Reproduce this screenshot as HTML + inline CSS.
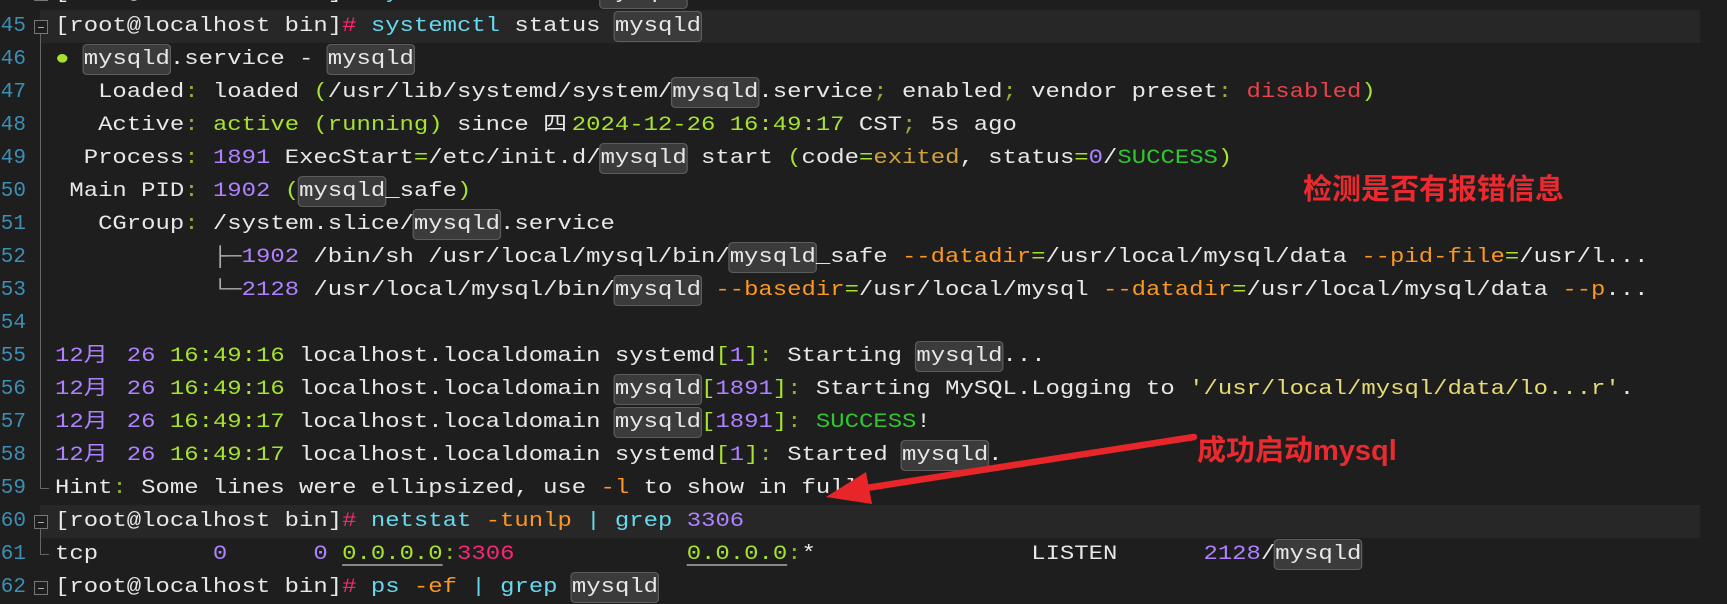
<!DOCTYPE html>
<html><head><meta charset="utf-8"><style>
html,body{margin:0;padding:0;}
body{width:1727px;height:578px;background:#1e1e1e;overflow:hidden;position:relative;font-family:"Liberation Mono","Noto Sans CJK SC",monospace;}
#w{position:absolute;left:0;top:2px;width:1727px;height:578px;}
.ln{position:absolute;left:0;width:26px;text-align:right;color:#3d8fb5;font-size:21px;line-height:33px;height:33px;}
.cur{position:absolute;left:40px;width:1660px;height:33px;background:#272727;}
.fold{position:absolute;left:34px;width:12px;height:12px;border:1px solid #777;background:#1e1e1e;}
.fold:after{content:"";position:absolute;left:3px;top:5.5px;width:6px;height:1px;background:#aaa;}
.vl{position:absolute;width:1px;background:#666;}
.hl{position:absolute;height:1px;background:#666;}
#t{position:absolute;left:55px;top:0;transform:scaleX(1.196);transform-origin:0 0;}
.l{position:absolute;left:0;white-space:pre;font-size:20px;line-height:33px;height:33px;color:#e8e8e8;}
.p{color:#f92672}.c{color:#66d9ef}.g{color:#a6e22e}.v{color:#ae81ff}.o{color:#fd971f}.r{color:#e8434a}.y{color:#e6db74}.s{color:#2ec82e}.e{color:#d2a23a}.k{color:#8fae3a}.b{color:#aaa}
.h{background:#3b3b3b;border:1px solid #5c5c5c;border-radius:4px;padding:3px 0;margin:0 -1px;}
.u{text-decoration:underline;text-decoration-color:#888;text-underline-offset:5px;}
.cj{display:inline-block;width:24px;}
.cj2{display:inline-block;width:24px;}
.ann{position:absolute;color:#ea2a2e;font-family:"Liberation Sans","Noto Sans CJK SC",sans-serif;font-weight:bold;font-size:29px;line-height:36px;white-space:nowrap;}
</style></head><body>
<div id="w">
<div class="cur" style="top:8px"></div>
<div class="cur" style="top:503px"></div>

<div class="ln" style="top:-25px">44</div>
<div class="ln" style="top:8px">45</div>
<div class="ln" style="top:41px">46</div>
<div class="ln" style="top:74px">47</div>
<div class="ln" style="top:107px">48</div>
<div class="ln" style="top:140px">49</div>
<div class="ln" style="top:173px">50</div>
<div class="ln" style="top:206px">51</div>
<div class="ln" style="top:239px">52</div>
<div class="ln" style="top:272px">53</div>
<div class="ln" style="top:305px">54</div>
<div class="ln" style="top:338px">55</div>
<div class="ln" style="top:371px">56</div>
<div class="ln" style="top:404px">57</div>
<div class="ln" style="top:437px">58</div>
<div class="ln" style="top:470px">59</div>
<div class="ln" style="top:503px">60</div>
<div class="ln" style="top:536px">61</div>
<div class="ln" style="top:569px">62</div>

<div class="fold" style="top:-15px"></div>
<div class="fold" style="top:18px"></div>
<div class="vl" style="left:40px;top:32px;height:455px"></div>
<div class="hl" style="left:40px;top:486px;width:9px"></div>
<div class="fold" style="top:513px"></div>
<div class="vl" style="left:40px;top:527px;height:26px"></div>
<div class="hl" style="left:40px;top:552px;width:9px"></div>
<div class="fold" style="top:579px"></div>

<div id="t">
<div class="l" style="top:-25px">[root@localhost bin]<span class="p">#</span> <span class="c">systemctl</span> start <span class="h">mysqld</span></div>
<div class="l" style="top:8px">[root@localhost bin]<span class="p">#</span> <span class="c">systemctl</span> status <span class="h">mysqld</span></div>
<div class="l" style="top:41px"><span class="g">●</span> <span class="h">mysqld</span>.service - <span class="h">mysqld</span></div>
<div class="l" style="top:74px">   Loaded<span class="k">:</span> loaded <span class="g">(</span>/usr/lib/systemd/system/<span class="h">mysqld</span>.service<span class="k">;</span> enabled<span class="k">;</span> vendor preset<span class="k">:</span> <span class="r">disabled</span><span class="g">)</span></div>
<div class="l" style="top:107px">   Active<span class="k">:</span> <span class="g">active (running)</span> since <span class="cj2">四</span><span class="g">2024-12-26 16:49:17</span> CST<span class="k">;</span> 5s ago</div>
<div class="l" style="top:140px">  Process<span class="k">:</span> <span class="v">1891</span> ExecStart<span class="g">=</span>/etc/init.d/<span class="h">mysqld</span> start <span class="g">(</span>code<span class="g">=</span><span class="e">exited</span>, status<span class="g">=</span><span class="v">0</span>/<span class="s">SUCCESS</span><span class="g">)</span></div>
<div class="l" style="top:173px"> Main PID<span class="k">:</span> <span class="v">1902</span> <span class="g">(</span><span class="h">mysqld</span>_safe<span class="g">)</span></div>
<div class="l" style="top:206px">   CGroup<span class="k">:</span> /system.slice/<span class="h">mysqld</span>.service</div>
<div class="l" style="top:239px">           <span class="b">├─</span><span class="v">1902</span> /bin/sh /usr/local/mysql/bin/<span class="h">mysqld</span>_safe <span class="o">--datadir</span><span class="g">=</span>/usr/local/mysql/data <span class="o">--pid-file</span><span class="g">=</span>/usr/l...</div>
<div class="l" style="top:272px">           <span class="b">└─</span><span class="v">2128</span> /usr/local/mysql/bin/<span class="h">mysqld</span> <span class="o">--basedir</span><span class="g">=</span>/usr/local/mysql <span class="o">--datadir</span><span class="g">=</span>/usr/local/mysql/data <span class="o">--p</span>...</div>
<div class="l" style="top:338px"><span class="v">12<span class="cj">月</span></span> <span class="v">26</span> <span class="g">16:49:16</span> localhost.localdomain systemd<span class="g">[</span><span class="v">1</span><span class="g">]</span><span class="k">:</span> Starting <span class="h">mysqld</span>...</div>
<div class="l" style="top:371px"><span class="v">12<span class="cj">月</span></span> <span class="v">26</span> <span class="g">16:49:16</span> localhost.localdomain <span class="h">mysqld</span><span class="g">[</span><span class="v">1891</span><span class="g">]</span><span class="k">:</span> Starting MySQL.Logging to <span class="y">'/usr/local/mysql/data/lo...r'</span>.</div>
<div class="l" style="top:404px"><span class="v">12<span class="cj">月</span></span> <span class="v">26</span> <span class="g">16:49:17</span> localhost.localdomain <span class="h">mysqld</span><span class="g">[</span><span class="v">1891</span><span class="g">]</span><span class="k">:</span> <span class="s">SUCCESS</span>!</div>
<div class="l" style="top:437px"><span class="v">12<span class="cj">月</span></span> <span class="v">26</span> <span class="g">16:49:17</span> localhost.localdomain systemd<span class="g">[</span><span class="v">1</span><span class="g">]</span><span class="k">:</span> Started <span class="h">mysqld</span>.</div>
<div class="l" style="top:470px">Hint<span class="k">:</span> Some lines were ellipsized, use <span class="o">-l</span> to show in full.</div>
<div class="l" style="top:503px">[root@localhost bin]<span class="p">#</span> <span class="c">netstat</span> <span class="o">-tunlp</span> <span class="c">|</span> <span class="c">grep</span> <span class="v">3306</span></div>
<div class="l" style="top:536px">tcp        <span class="v">0</span>      <span class="v">0</span> <span class="g u">0.0.0.0</span><span class="k">:</span><span class="p">3306</span>            <span class="g u">0.0.0.0</span><span class="k">:</span>*               LISTEN      <span class="v">2128</span>/<span class="h">mysqld</span></div>
<div class="l" style="top:569px">[root@localhost bin]<span class="p">#</span> <span class="c">ps</span> <span class="o">-ef</span> <span class="c">|</span> <span class="c">grep</span> <span class="h">mysqld</span></div>
</div>

<div class="ann" style="left:1303px;top:170px">检测是否有报错信息</div>
<div class="ann" style="left:1197px;top:431px">成功启动mysql</div>

<svg style="position:absolute;left:0;top:-2px" width="1727" height="578">
<line x1="1194" y1="437" x2="860" y2="489" stroke="#e8262a" stroke-width="6.5" stroke-linecap="round"/>
<polygon points="826,497 866,472 872,504" fill="#e8262a"/>
</svg>
</div>
</body></html>
